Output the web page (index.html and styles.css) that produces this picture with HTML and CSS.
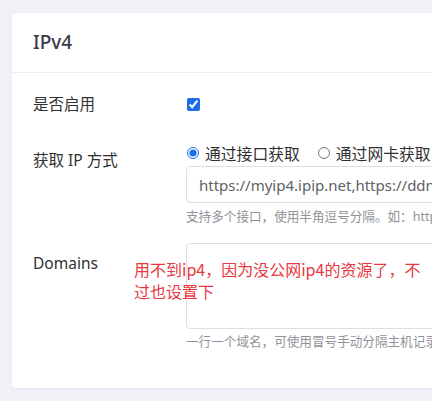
FILE: index.html
```html
<!DOCTYPE html>
<html lang="zh-CN">
<head>
<meta charset="utf-8">
<link rel="stylesheet" href="styles.css">
</head>
<body>
<div class="page">
  <div class="card">
    <div class="card-header">IPv4</div>
    <div class="card-body">
      <div class="row row-enable">
        <div class="label">是否启用</div>
        <div class="control">
          <input class="check" type="checkbox" checked>
        </div>
      </div>
      <div class="row row-method">
        <div class="label">获取 IP 方式</div>
        <div class="control">
          <div class="radios">
            <label class="radio"><input type="radio" name="m" checked><span>通过接口获取</span></label>
            <label class="radio"><input type="radio" name="m"><span>通过网卡获取</span></label>
          </div>
          <input class="text-input" type="text" value="https://myip4.ipip.net,https://ddns.oray.com/checkip,https://ip.3322.net">
          <div class="help">支持多个接口，使用半角逗号分隔。如：https://myip4.ipip.net</div>
        </div>
      </div>
      <div class="row row-domains">
        <div class="label">Domains</div>
        <div class="control">
          <textarea class="text-area"></textarea>
          <div class="help">一行一个域名，可使用冒号手动分隔主机记录和域名</div>
        </div>
      </div>
    </div>
  </div>
  <div class="note">用不到ip4，因为没公网ip4的资源了，不<br>过也设置下</div>
</div>
</body>
</html>
```

FILE: styles.css
```css
html, body {
  margin: 0;
  padding: 0;
}
body {
  background: #f0f1f6;
  overflow: hidden;
  width: 432px;
  height: 401px;
  font-family: "Noto Sans", "Noto Sans CJK SC", sans-serif;
}
.page {
  position: relative;
  padding: 13px 0 0 12px;
}
.card {
  width: 520px;
  background: #ffffff;
  border-radius: 4px;
  box-shadow: 0 1px 3px rgba(0, 0, 0, 0.04);
}
.card-header {
  height: 59px;
  line-height: 59px;
  padding: 0 21px;
  border-bottom: 1px solid #ebedf2;
  font-size: 19px;
  font-weight: 500;
  color: #3b3a4a;
}
.card-body {
  padding: 11px 0 36px 21px;
}
.row {
  display: flex;
  align-items: flex-start;
}
.row + .row {
  margin-top: 16px;
}
.label {
  width: 153px;
  flex: none;
  line-height: 40px;
  font-size: 15.5px;
  color: #303133;
}
.control {
  flex: 1;
  min-width: 0;
  overflow: hidden;
}
.row-enable .control {
  height: 40px;
  display: flex;
  align-items: center;
}
.check {
  margin: 0 0 0 1px;
  width: 13px;
  height: 13px;
  accent-color: #1b6fe6;
}
.radios {
  height: 26px;
  display: flex;
  align-items: center;
  gap: 18px;
  padding-left: 1px;
}
.radio {
  display: flex;
  align-items: center;
  gap: 6px;
  font-size: 15.8px;
  color: #303133;
  white-space: nowrap;
}
.radio input {
  margin: 0;
  width: 12px;
  height: 12px;
  accent-color: #1b6fe6;
}
.text-input {
  display: block;
  box-sizing: border-box;
  width: 320px;
  height: 37px;
  margin: 0;
  padding: 0 12px;
  border: 1px solid #dcdfe6;
  border-radius: 4px;
  font-family: "Noto Sans", sans-serif;
  font-size: 15px;
  color: #606266;
  outline: none;
}
.help {
  margin-top: 4px;
  line-height: 20px;
  font-size: 12.6px;
  color: #909399;
  white-space: nowrap;
  overflow: hidden;
}
.row-domains .help {
  margin-top: 3px;
}
.text-area {
  display: block;
  box-sizing: border-box;
  width: 320px;
  height: 86px;
  margin: 0;
  border: 1px solid #dcdfe6;
  border-radius: 4px;
  resize: none;
  outline: none;
}
.note {
  position: absolute;
  left: 134px;
  top: 258px;
  font-size: 16px;
  line-height: 22px;
  color: #e8383f;
  font-family: "Noto Sans CJK SC", sans-serif;
  white-space: nowrap;
}
```
